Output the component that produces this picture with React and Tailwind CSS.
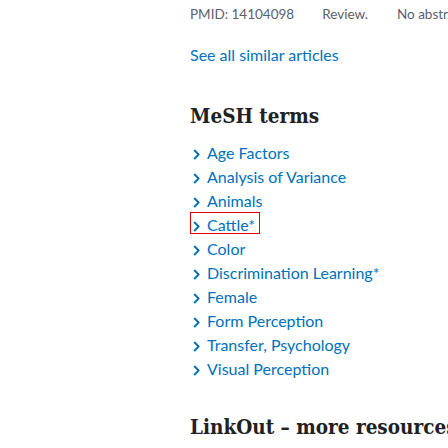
const meshTerms = [
  'Age Factors',
  'Analysis of Variance',
  'Animals',
  'Cattle*',
  'Color',
  'Discrimination Learning*',
  'Female',
  'Form Perception',
  'Transfer, Psychology',
  'Visual Perception',
];

function Chevron() {
  return (
    <svg width="7" height="11" viewBox="0 0 7 11" className="shrink-0 mt-[3px]">
      <polyline points="1.2,1 5.6,5.5 1.2,10" fill="none" stroke="#0071bc" strokeWidth="1.9" />
    </svg>
  );
}

function MeshItem({ term, focused }) {
  return (
    <li className="flex h-6 items-center">
      <button className="relative flex items-center gap-[7px] pl-[3px] text-[#0071bc]">
        <Chevron />
        <span>{term}</span>
        {focused && (
          <span className="absolute left-0 top-[-1px] h-[22px] w-[70px] border border-[#e00000]" />
        )}
      </button>
    </li>
  );
}

export default function App() {
  return (
    <div className="h-[448px] w-[448px] overflow-hidden bg-white pl-[190px] whitespace-nowrap font-['Lato',sans-serif]">
      <div className="flex pt-[4px] text-[13.5px] leading-5 text-[#5b616b]">
        <span className="mr-[28px]">PMID: 14104098</span>
        <span className="mr-[29px]">Review.</span>
        <span>No abstract available.</span>
      </div>

      <a href="#" className="mt-[19px] block text-[16px] leading-6 text-[#0071bc]">
        See all similar articles
      </a>

      <h2 className="mt-[34px] font-['DejaVu_Serif_Condensed','DejaVu_Serif',serif] text-[20.5px] font-bold leading-[30px] text-[#212121]">
        MeSH terms
      </h2>

      <ul className="mt-[10px] text-[16px] leading-6">
        {meshTerms.map((t) => (
          <MeshItem key={t} term={t} focused={t === 'Cattle*'} />
        ))}
      </ul>

      <h2 className="mt-[31px] font-['DejaVu_Serif_Condensed','DejaVu_Serif',serif] text-[20.5px] font-bold leading-[30px] text-[#212121]">
        LinkOut – more resources
      </h2>
    </div>
  );
}
